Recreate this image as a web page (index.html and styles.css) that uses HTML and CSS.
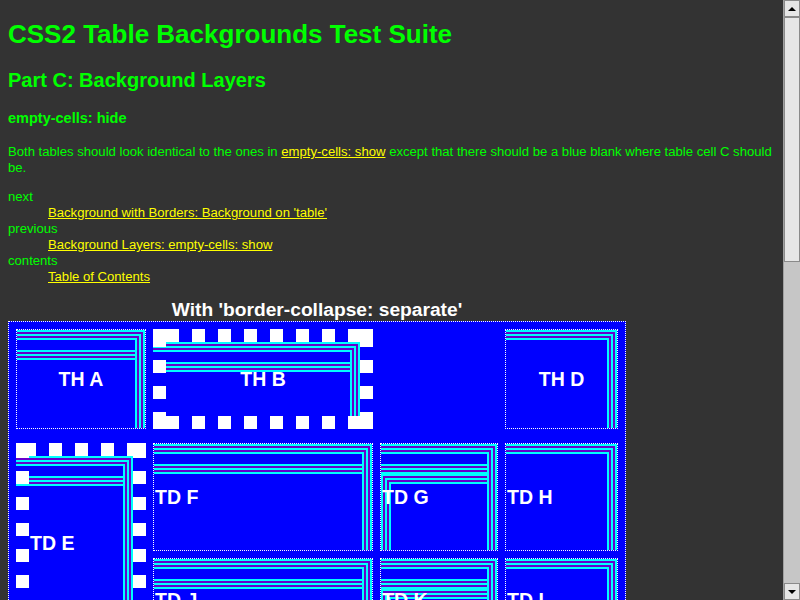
FILE: index.html
```html
<!DOCTYPE html>
<html lang="en">
<head>
<meta charset="utf-8">
<title>CSS2 Table Backgrounds Test Suite: Part C: Background Layers: empty-cells: hide</title>
<link rel="stylesheet" href="styles.css">
</head>
<body>
<div class="window">
  <main class="page">
    <h1>CSS2 Table Backgrounds Test Suite</h1>
    <h2>Part C: Background Layers</h2>
    <h3>empty-cells: hide</h3>
    <p>Both tables should look identical to the ones in <a href="#">empty-cells: show</a> except that there should be a blue blank where table cell C should be.</p>
    <dl>
      <dt>next</dt>
      <dd><a href="#">Background with Borders: Background on 'table'</a></dd>
      <dt>previous</dt>
      <dd><a href="#">Background Layers: empty-cells: show</a></dd>
      <dt>contents</dt>
      <dd><a href="#">Table of Contents</a></dd>
    </dl>
    <section class="test">
      <div class="caption">With 'border-collapse: separate'</div>
      <div class="grid">
        <div class="cell th c1 r1 bg-cs">TH A</div>
        <div class="cell th thick c2 r1 bg-b">TH B</div>
        <div class="cell-empty c3 r1"></div>
        <div class="cell th c4 r1 bg-c">TH D</div>
        <div class="cell thick c1 r2 span2 bg-e">TD E</div>
        <div class="cell c2 r2 bg-cs">TD F</div>
        <div class="cell c3 r2 bg-cst">TD G</div>
        <div class="cell c4 r2 bg-c">TD H</div>
        <div class="cell c2 r3 bg-cs">TD J</div>
        <div class="cell c3 r3 bg-cst">TD K</div>
        <div class="cell c4 r3 bg-c">TD L</div>
      </div>
    </section>
  </main>
  <div class="scrollbar" aria-hidden="true">
    <div class="sb-btn"><span class="arrow-up"></span></div>
    <div class="sb-track"><div class="sb-thumb"></div></div>
    <div class="sb-btn"><span class="arrow-down"></span></div>
  </div>
</div>
</body>
</html>
```

FILE: styles.css
```css
:root {
  --corner:
    linear-gradient(#00ffff, #00ffff) 0 0 / 100% 2px no-repeat,
    linear-gradient(#00ffff, #00ffff) 100% 0 / 2px 100% no-repeat,
    linear-gradient(#6600cc, #6600cc) 0 2px / 100% 2px no-repeat,
    linear-gradient(#6600cc, #6600cc) right 2px top 0 / 2px 100% no-repeat,
    linear-gradient(#00ffff, #00ffff) 0 4px / 100% 2px no-repeat,
    linear-gradient(#00ffff, #00ffff) right 4px top 0 / 2px 100% no-repeat,
    linear-gradient(#6600cc, #6600cc) 0 6px / 100% 2px no-repeat,
    linear-gradient(#6600cc, #6600cc) right 6px top 0 / 2px 100% no-repeat,
    linear-gradient(#00ffff, #00ffff) 0 8px / 100% 2px no-repeat,
    linear-gradient(#00ffff, #00ffff) right 8px top 0 / 2px 100% no-repeat;
  --corner-ext:
    linear-gradient(#00ffff, #00ffff) -13px 0 / calc(100% + 13px) 2px no-repeat padding-box border-box,
    linear-gradient(#00ffff, #00ffff) 100% 0 / 2px 100% no-repeat,
    linear-gradient(#6600cc, #6600cc) -13px 2px / calc(100% + 13px) 2px no-repeat padding-box border-box,
    linear-gradient(#6600cc, #6600cc) right 2px top 0 / 2px 100% no-repeat,
    linear-gradient(#00ffff, #00ffff) -13px 4px / calc(100% + 13px) 2px no-repeat padding-box border-box,
    linear-gradient(#00ffff, #00ffff) right 4px top 0 / 2px 100% no-repeat,
    linear-gradient(#6600cc, #6600cc) -13px 6px / calc(100% + 13px) 2px no-repeat padding-box border-box,
    linear-gradient(#6600cc, #6600cc) right 6px top 0 / 2px 100% no-repeat,
    linear-gradient(#00ffff, #00ffff) -13px 8px / calc(100% + 13px) 2px no-repeat padding-box border-box,
    linear-gradient(#00ffff, #00ffff) right 8px top 0 / 2px 100% no-repeat;
  --bands: linear-gradient(to bottom,
    #00ffff 0 2px, #6600cc 2px 4px, #00ffff 4px 6px, #6600cc 6px 8px, #00ffff 8px 10px);
  --second: var(--bands) 0 20px / 100% 10px no-repeat;
  --second-ext: var(--bands) -13px 20px / calc(100% + 13px) 10px no-repeat padding-box border-box;
  --topleft:
    linear-gradient(#00ffff, #00ffff) 0 30px / 100% 2px no-repeat,
    linear-gradient(#00ffff, #00ffff) 0 30px / 2px calc(100% - 30px) no-repeat,
    linear-gradient(#6600cc, #6600cc) 0 32px / 100% 2px no-repeat,
    linear-gradient(#6600cc, #6600cc) 2px 30px / 2px calc(100% - 30px) no-repeat,
    linear-gradient(#00ffff, #00ffff) 0 34px / 100% 2px no-repeat,
    linear-gradient(#00ffff, #00ffff) 4px 30px / 2px calc(100% - 30px) no-repeat,
    linear-gradient(#6600cc, #6600cc) 0 36px / 100% 2px no-repeat,
    linear-gradient(#6600cc, #6600cc) 6px 30px / 2px calc(100% - 30px) no-repeat,
    linear-gradient(#00ffff, #00ffff) 0 38px / 100% 2px no-repeat,
    linear-gradient(#00ffff, #00ffff) 8px 30px / 2px calc(100% - 30px) no-repeat;
  --sq-corners:
    linear-gradient(#fff, #fff) 0 0 / 13px 13px no-repeat border-box,
    linear-gradient(#fff, #fff) 100% 0 / 13px 13px no-repeat border-box,
    linear-gradient(#fff, #fff) 0 100% / 13px 13px no-repeat border-box,
    linear-gradient(#fff, #fff) 100% 100% / 13px 13px no-repeat border-box;
}

html, body {
  margin: 0;
  padding: 0;
  background: #333333;
}

.window {
  display: flex;
  height: 100vh;
  overflow: hidden;
}

.page {
  flex: 1;
  min-width: 0;
  overflow: hidden;
  padding: 0 8px;
  color: #00ff00;
  font-family: "Liberation Sans", Arial, sans-serif;
  font-size: 13.12px;
  line-height: 16px;
}

h1 {
  margin: 19px 0 0;
  font-size: 26px;
  line-height: 30px;
  font-weight: bold;
}

h2 {
  margin: 20px 0 0;
  font-size: 20px;
  line-height: 23px;
  font-weight: bold;
}

h3 {
  margin: 18px 0 0;
  font-size: 14.5px;
  line-height: 17px;
  font-weight: bold;
}

p {
  margin: 17px 0 0;
}

a {
  color: #ffff00;
  text-decoration: underline;
}

dl {
  margin: 13px 0 0;
}

dd {
  margin: 0 0 0 40px;
}

.test {
  margin-top: 14px;
  width: 618px;
}

.caption {
  text-align: center;
  color: #ffffff;
  font-size: 19.2px;
  line-height: 22px;
  font-weight: bold;
}

.grid {
  display: grid;
  grid-template-columns: 130px 220px 118px 113px;
  grid-template-rows: 100px 0 108px 84px;
  gap: 7px;
  padding: 7px;
  border: 1px dotted #ffffff;
  background: #0000ff;
}

.cell {
  box-sizing: border-box;
  border: 1px dotted #ffffff;
  padding: 1px;
  display: flex;
  align-items: center;
  color: #ffffff;
  font-size: 19.5px;
  line-height: 22px;
  font-weight: bold;
  white-space: nowrap;
}

.th { justify-content: center; }
.thick { border: 13px solid transparent; }

.c1 { grid-column: 1; }
.c2 { grid-column: 2; }
.c3 { grid-column: 3; }
.c4 { grid-column: 4; }
.r1 { grid-row: 1; }
.r2 { grid-row: 3; }
.r3 { grid-row: 4; }
.span2 { grid-row: 3 / span 2; }

.bg-c { background: var(--corner); }
.bg-cs { background: var(--corner), var(--second); }
.bg-cst { background: var(--corner), var(--second), var(--topleft); }

.bg-b {
  background:
    var(--sq-corners),
    repeating-linear-gradient(to right, transparent 0 13px, #fff 13px 26px) 0 0 / 100% 13px no-repeat border-box,
    repeating-linear-gradient(to right, transparent 0 13px, #fff 13px 26px) 0 100% / 100% 13px no-repeat border-box,
    repeating-linear-gradient(to bottom, transparent 0 5px, #fff 5px 18px, transparent 18px 26px) 0 0 / 13px 100% no-repeat border-box,
    repeating-linear-gradient(to bottom, transparent 0 5px, #fff 5px 18px, transparent 18px 26px) 100% 0 / 13px 100% no-repeat border-box,
    var(--corner-ext),
    var(--second-ext);
}

.bg-e {
  background:
    var(--sq-corners),
    repeating-linear-gradient(to right, transparent 0 7px, #fff 7px 20px, transparent 20px 26px) 0 0 / 100% 13px no-repeat border-box,
    repeating-linear-gradient(to right, transparent 0 7px, #fff 7px 20px, transparent 20px 26px) 0 100% / 100% 13px no-repeat border-box,
    repeating-linear-gradient(to bottom, transparent 0 2px, #fff 2px 15px, transparent 15px 26px) 0 0 / 13px 100% no-repeat border-box,
    repeating-linear-gradient(to bottom, transparent 0 2px, #fff 2px 15px, transparent 15px 26px) 100% 0 / 13px 100% no-repeat border-box,
    var(--corner-ext),
    var(--second-ext);
}

/* scrollbar */
.scrollbar {
  width: 17px;
  flex: none;
  display: flex;
  flex-direction: column;
  background: #c6c6c6;
  border-left: 1px solid #a0a0a0;
  box-sizing: border-box;
}

.sb-btn {
  height: 17px;
  flex: none;
  box-sizing: border-box;
  border: 1px solid #8a8a8a;
  background: #e6e6e6;
  display: flex;
  align-items: center;
  justify-content: center;
}

.arrow-up, .arrow-down {
  width: 0;
  height: 0;
  border-left: 4px solid transparent;
  border-right: 4px solid transparent;
}
.arrow-up { border-bottom: 4px solid #000; }
.arrow-down { border-top: 4px solid #000; }

.sb-track {
  flex: 1;
}

.sb-thumb {
  height: 245px;
  box-sizing: border-box;
  border: 1px solid #8a8a8a;
  background: #e6e6e6;
}
```
